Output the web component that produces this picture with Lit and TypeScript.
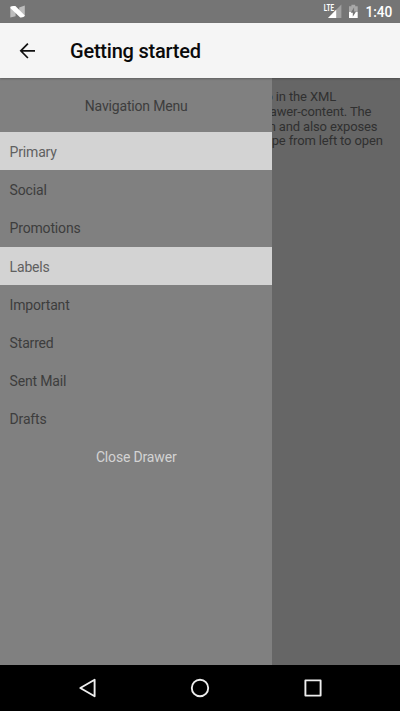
import { LitElement, html, css } from "lit";
import { customElement } from "lit/decorators.js";
import { classMap } from "lit/directives/class-map.js";

interface Row {
  label: string;
  heading?: boolean;
}

const rows: Row[] = [
  { label: "Primary", heading: true },
  { label: "Social" },
  { label: "Promotions" },
  { label: "Labels", heading: true },
  { label: "Important" },
  { label: "Starred" },
  { label: "Sent Mail" },
  { label: "Drafts" },
];

@customElement("status-bar")
class StatusBar extends LitElement {
  static styles = css`
    :host { display: flex; flex: none; height: 23px; background: #757575; color: #fff; }
    svg { display: block; width: 400px; height: 23px; }
    .lte { font: 700 8.6px Roboto, sans-serif; fill: #fff; }
    .time { font: 500 14px Roboto, sans-serif; fill: #fff; }
  `;
  render() {
    return html`<svg viewBox="0 0 400 23">
      <path d="M10.3 6.6L15.6 9V16.2L10.3 17.4zM19.2 7.4L24.8 5.6V16.6L19.2 14z" fill="#bdbdbd"/>
      <path d="M10.3 7Q11.6 5.4 15.4 6.1L24.8 15.4Q24 17.8 20.2 17.4L10.8 8.4z" fill="#fff"/>
      <path d="M341.4 4.6V18H328z" fill="#a0a0a0"/>
      <path d="M336.2 9.8V18H328z" fill="#fff"/>
      <text class="lte" x="323.8" y="10.9" textLength="10.2" lengthAdjust="spacingAndGlyphs">LTE</text>
      <path d="M349 6.2H351.4V4.8H355.2V6.2H357.7V12H349z" fill="#a8a8a8"/>
      <path d="M349 12H357.7V18H349z" fill="#fff"/>
      <path d="M354.1 7.3L350.8 12.7H352.8V16.8L356.1 11.5H354.1z" fill="#757575"/>
      <text class="time" x="365.4" y="17.1" textLength="27" lengthAdjust="spacingAndGlyphs">1:40</text>
    </svg>`;
  }
}

@customElement("app-header")
class AppHeader extends LitElement {
  static styles = css`
    :host { display: flex; flex: none; align-items: center; height: 55px; background: #f5f5f5;
      font: 500 20px/24px Roboto, sans-serif; letter-spacing: -.22px; color: #0a0a0a;
      position: relative; z-index: 1; box-shadow: 0 1px 2px rgba(0, 0, 0, .25); }
    svg { width: 16px; height: 16px; margin: 0 35px 0 19px; }
    span { padding-top: 1px; }
  `;
  render() {
    return html`<svg viewBox="0 0 16 16" fill="none" stroke="#111" stroke-width="1.7">
      <path d="M16 7.8H2M8.9 .6L1.8 7.8L8.9 15"/></svg><span>Getting started</span>`;
  }
}

@customElement("nav-drawer")
class NavDrawer extends LitElement {
  static styles = css`
    :host { display: block; flex: none; width: 272.4px; background: #808080; color: #3d3d3d;
      font: 400 14px/16px Roboto, sans-serif; letter-spacing: -.17px; }
    .title { height: 54.2px; line-height: 56.5px; text-align: center; }
    .row { height: 38.15px; line-height: 41px; padding-left: 9.6px; }
    .heading { background: #d3d3d3; color: #606060; }
    .close { height: 38px; line-height: 40px; text-align: center; color: #d3d3d3; }
  `;
  render() {
    return html`<div class="title">Navigation Menu</div>
      ${rows.map((r) => html`<div class=${classMap({ row: true, heading: !!r.heading })}>${r.label}</div>`)}
      <div class="close">Close Drawer</div>`;
  }
}

@customElement("system-nav")
class SystemNav extends LitElement {
  static styles = css`
    :host { display: flex; flex: none; justify-content: center; align-items: center; gap: 92.5px;
      height: 46.5px; background: #000; }
    svg { width: 20px; height: 20px; fill: none; stroke: #eee; stroke-width: 1.9; stroke-linejoin: round; }
  `;
  render() {
    return html`
      <svg viewBox="0 0 20 20"><path d="M2.3 10L16.6 1.8V18.2z"/></svg>
      <svg viewBox="0 0 20 20"><circle cx="10" cy="10" r="8.2"/></svg>
      <svg viewBox="0 0 20 20"><path d="M2.4 2.4H17.6V17.6H2.4z"/></svg>`;
  }
}

@customElement("app-root")
class AppRoot extends LitElement {
  static styles = css`
    :host { display: flex; flex-direction: column; width: 400px; height: 711px; overflow: hidden; }
    .body { display: flex; flex: 1; min-height: 0; background: #666; }
    .content { flex: 1; min-width: 0; overflow: hidden; display: flex; flex-direction: column;
      align-items: flex-end; padding-top: 12px; color: #303030;
      font: 400 13px/14.8px Roboto, sans-serif; letter-spacing: -.14px; white-space: nowrap; }
    .l1 { padding-right: 64px; }
    .l2 { padding-right: 28.7px; }
    .l3 { padding-right: 22.7px; }
    .l4 { padding-right: 17.3px; }
  `;
  render() {
    return html`<status-bar></status-bar>
      <app-header></app-header>
      <div class="body">
        <nav-drawer></nav-drawer>
        <div class="content">
          <div class="l1">o in the XML</div>
          <div class="l2">awer-content. The</div>
          <div class="l3">n and also exposes</div>
          <div class="l4">ipe from left to open</div>
        </div>
      </div>
      <system-nav></system-nav>`;
  }
}
